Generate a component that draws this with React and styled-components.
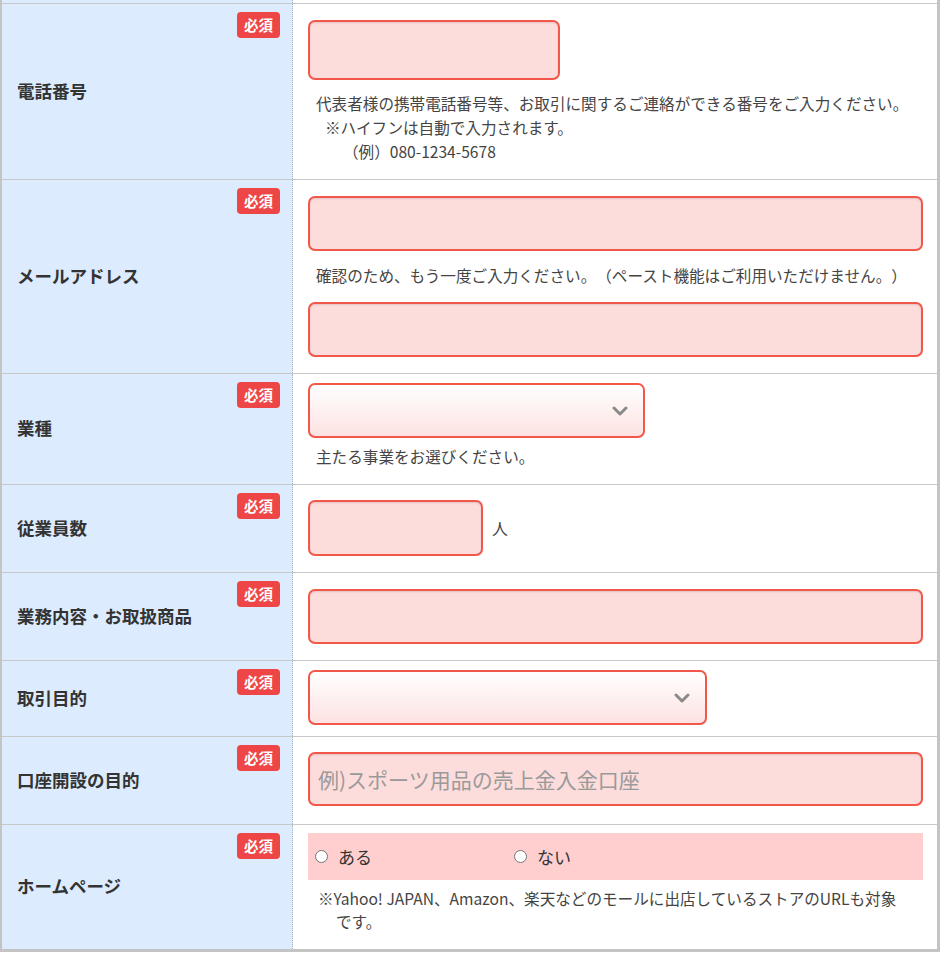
import styled, { createGlobalStyle } from "styled-components";

const GlobalStyle = createGlobalStyle`
  body {
    margin: 0;
    background: #ffffff;
    font-family: "Noto Sans CJK JP", "Noto Sans", sans-serif;
    color: #333333;
    text-spacing-trim: space-all;
  }
`;

const Chevron = () => (
  <svg width="16" height="10" viewBox="0 0 16 10">
    <polyline
      points="2,2 8,8 14,2"
      fill="none"
      stroke="#8a8a8a"
      strokeWidth="3"
      strokeLinecap="round"
      strokeLinejoin="round"
    />
  </svg>
);

const App = () => {
  return (
    <>
      <GlobalStyle />
      <Table>
        <Row $stub>
          <LabelCell />
          <ContentCell />
        </Row>

        <Row>
          <LabelCell>
            電話番号
            <Badge>必須</Badge>
          </LabelCell>
          <ContentCell $pt={16} $pb={16}>
            <TextInput $width={252} $height={60} />
            <HelpBlock>
              <HelpLine>
                代表者様の携帯電話番号等、お取引に関するご連絡ができる番号をご入力ください。
              </HelpLine>
              <HelpLine $indent={9}>※ハイフンは自動で入力されます。</HelpLine>
              <HelpLine $indent={27}>（例）080-1234-5678</HelpLine>
            </HelpBlock>
          </ContentCell>
        </Row>

        <Row>
          <LabelCell>
            メールアドレス
            <Badge>必須</Badge>
          </LabelCell>
          <ContentCell $pt={16} $pb={16}>
            <TextInput />
            <HelpBlock $mt={12} $mb={15}>
              <HelpLine>
                確認のため、もう一度ご入力ください。（ペースト機能はご利用いただけません。）
              </HelpLine>
            </HelpBlock>
            <TextInput />
          </ContentCell>
        </Row>

        <Row>
          <LabelCell>
            業種
            <Badge>必須</Badge>
          </LabelCell>
          <ContentCell $pt={9} $pb={16}>
            <SelectWrap $width={337}>
              <Select defaultValue="">
                <option value=""></option>
              </Select>
              <SelectArrow>
                <Chevron />
              </SelectArrow>
            </SelectWrap>
            <HelpBlock $mt={6}>
              <HelpLine>主たる事業をお選びください。</HelpLine>
            </HelpBlock>
          </ContentCell>
        </Row>

        <Row>
          <LabelCell>
            従業員数
            <Badge>必須</Badge>
          </LabelCell>
          <ContentCell $pt={15} $pb={16}>
            <InlineGroup>
              <TextInput $width={175} $height={56} />
              <Unit>人</Unit>
            </InlineGroup>
          </ContentCell>
        </Row>

        <Row>
          <LabelCell>
            業務内容・お取扱商品
            <Badge>必須</Badge>
          </LabelCell>
          <ContentCell $pt={16} $pb={16}>
            <TextInput />
          </ContentCell>
        </Row>

        <Row>
          <LabelCell>
            取引目的
            <Badge>必須</Badge>
          </LabelCell>
          <ContentCell $pt={9} $pb={11}>
            <SelectWrap $width={399}>
              <Select defaultValue="">
                <option value=""></option>
              </Select>
              <SelectArrow>
                <Chevron />
              </SelectArrow>
            </SelectWrap>
          </ContentCell>
        </Row>

        <Row>
          <LabelCell>
            口座開設の目的
            <Badge>必須</Badge>
          </LabelCell>
          <ContentCell $pt={15} $pb={18}>
            <TextInput $height={54} placeholder="例)スポーツ用品の売上金入金口座" />
          </ContentCell>
        </Row>

        <Row>
          <LabelCell>
            ホームページ
            <Badge>必須</Badge>
          </LabelCell>
          <ContentCell $pt={8} $pb={16}>
            <RadioBox>
              <RadioLabel>
                <Radio type="radio" name="hp" />
                ある
              </RadioLabel>
              <RadioLabel>
                <Radio type="radio" name="hp" />
                ない
              </RadioLabel>
            </RadioBox>
            <Note>
              ※Yahoo! JAPAN、Amazon、楽天などのモールに出店しているストアのURLも対象です。
            </Note>
          </ContentCell>
        </Row>
      </Table>
    </>
  );
};
export default App;

const Table = styled.div`
  width: 940px;
  box-sizing: border-box;
  border-left: 2px solid #c4c4c4;
  border-right: 3px solid #c4c4c4;
  border-bottom: 3px solid #c4c4c4;
`;

const Row = styled.div`
  display: grid;
  grid-template-columns: 291px 1fr;
  border-bottom: 1px solid #c8c8c8;
  height: ${(p) => (p.$stub ? "3px" : "auto")};
  &:last-child {
    border-bottom: none;
  }
`;

const LabelCell = styled.div`
  position: relative;
  display: flex;
  align-items: center;
  box-sizing: border-box;
  padding: 0 0 3px 15px;
  background: #dcebfd;
  border-right: 1px dotted #a9b4c2;
  font-size: 17.5px;
  font-weight: 700;
  color: #333333;
`;

const Badge = styled.span`
  position: absolute;
  top: 8px;
  right: 12px;
  width: 43px;
  height: 26px;
  display: flex;
  align-items: center;
  justify-content: center;
  background: #ee4646;
  border-radius: 4px;
  color: #ffffff;
  font-size: 14.5px;
  font-weight: 700;
  line-height: 1;
`;

const ContentCell = styled.div`
  box-sizing: border-box;
  padding: ${(p) => p.$pt || 0}px 14px ${(p) => p.$pb || 0}px 15px;
  background: #ffffff;
  min-width: 0;
`;

const TextInput = styled.input`
  display: block;
  box-sizing: border-box;
  width: ${(p) => (p.$width ? `${p.$width}px` : "100%")};
  height: ${(p) => p.$height || 55}px;
  margin: 0;
  padding: 0 8px;
  border: 2px solid #f2584a;
  border-radius: 7px;
  background: #fddcdc;
  box-shadow: inset 0 1px 2px rgba(0, 0, 0, 0.12);
  font-family: "Noto Sans CJK JP", sans-serif;
  font-size: 21px;
  color: #333333;
  outline: none;
  &::placeholder {
    color: #9a9a9a;
  }
`;

const HelpBlock = styled.div`
  margin-top: ${(p) => (p.$mt !== undefined ? p.$mt : 11)}px;
  margin-bottom: ${(p) => p.$mb || 0}px;
  padding-left: 8px;
`;

const HelpLine = styled.div`
  padding-left: ${(p) => p.$indent || 0}px;
  font-size: 15.6px;
  line-height: 24px;
  color: #444444;
  white-space: nowrap;
`;

const SelectWrap = styled.div`
  position: relative;
  width: ${(p) => p.$width}px;
  height: 55px;
`;

const Select = styled.select`
  appearance: none;
  display: block;
  box-sizing: border-box;
  width: 100%;
  height: 100%;
  margin: 0;
  padding: 0 40px 0 10px;
  border: 2px solid #f2584a;
  border-radius: 7px;
  background: linear-gradient(to bottom, #ffffff 0%, #fde2e2 100%);
  font-family: "Noto Sans CJK JP", sans-serif;
  font-size: 17px;
  color: #333333;
  outline: none;
`;

const SelectArrow = styled.span`
  position: absolute;
  top: 50%;
  right: 17px;
  transform: translateY(-50%);
  display: flex;
  pointer-events: none;
`;

const InlineGroup = styled.div`
  display: flex;
  align-items: center;
  gap: 9px;
`;

const Unit = styled.span`
  font-size: 16px;
  color: #444444;
`;

const RadioBox = styled.div`
  display: flex;
  align-items: center;
  height: 47px;
  padding-left: 7px;
  background: #ffcfcf;
`;

const RadioLabel = styled.label`
  display: flex;
  align-items: center;
  gap: 10px;
  width: 199px;
  font-size: 17px;
  color: #333333;
`;

const Radio = styled.input`
  appearance: none;
  width: 13px;
  height: 13px;
  margin: 0;
  border: 1px solid #767676;
  border-radius: 50%;
  background: #ffffff;
  box-sizing: border-box;
`;

const Note = styled.p`
  margin: 7px 12px 0 10px;
  padding-left: 18px;
  text-indent: -18px;
  font-size: 15.6px;
  line-height: 23px;
  color: #444444;
`;
